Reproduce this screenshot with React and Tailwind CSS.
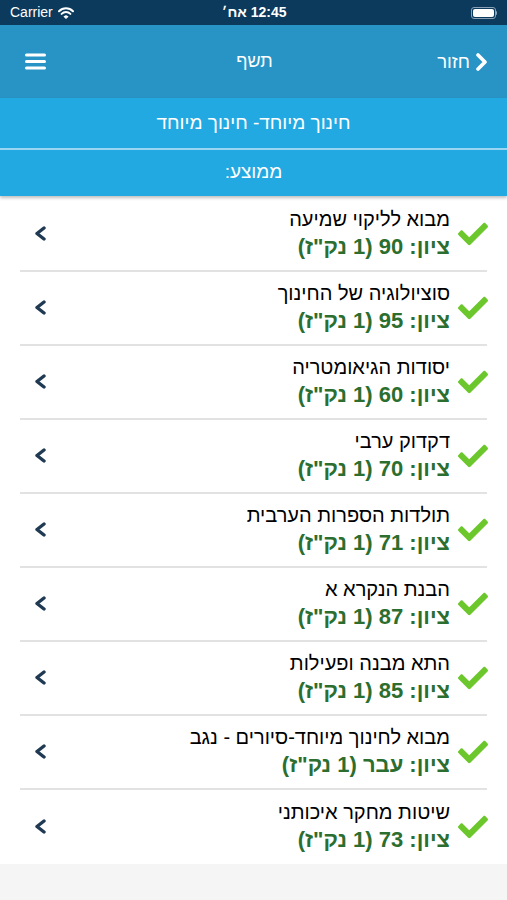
import { FaCheck } from 'react-icons/fa'

const COURSES = [
  { name: 'מבוא לליקוי שמיעה', grade: '90' },
  { name: 'סוציולוגיה של החינוך', grade: '95' },
  { name: 'יסודות הגיאומטריה', grade: '60' },
  { name: 'דקדוק ערבי', grade: '70' },
  { name: 'תולדות הספרות הערבית', grade: '71' },
  { name: 'הבנת הנקרא א', grade: '87' },
  { name: 'התא מבנה ופעילות', grade: '85' },
  { name: 'מבוא לחינוך מיוחד-סיורים - נגב', grade: 'עבר' },
  { name: 'שיטות מחקר איכותני', grade: '73' },
]

const font = { fontFamily: '"Liberation Sans", Arial, sans-serif' }

// chevron drawn as a thick rounded stroke (like the iOS app's glyph)
function Chevron({ dir = 'left', color, w = 12, h = 14, stroke = 3.4 }) {
  const d = dir === 'left' ? `M${w - 3} 2 L3 ${h / 2} L${w - 3} ${h - 2}` : `M3 2 L${w - 3} ${h / 2} L3 ${h - 2}`
  return (
    <svg width={w} height={h} viewBox={`0 0 ${w} ${h}`}>
      <path d={d} fill="none" stroke={color} strokeWidth={stroke} strokeLinecap="round" strokeLinejoin="round" />
    </svg>
  )
}

function StatusBar() {
  return (
    <div className="h-[25px] bg-[#0b3a5d] flex items-center justify-between px-[10px] text-white text-[14px]" style={font}>
      <div className="flex items-center gap-[5px]">
        <span>Carrier</span>
        <svg width="16" height="12" viewBox="0 0 16 12">
          <path d="M1 4.2 A10 10 0 0 1 15 4.2" fill="none" stroke="white" strokeWidth="2" strokeLinecap="round" />
          <path d="M3.6 6.9 A6.3 6.3 0 0 1 12.4 6.9" fill="none" stroke="white" strokeWidth="2" strokeLinecap="round" />
          <path d="M6 9.6 A3 3 0 0 1 10 9.6 L8 11.6 Z" fill="white" stroke="white" strokeWidth="1" strokeLinejoin="round" />
        </svg>
      </div>
      <span className="font-bold text-[14px] -ml-[36px]" dir="rtl">12:45 אח׳</span>
      <div className="flex items-center">
        <div className="w-[25px] h-[12px] rounded-[3px] border border-[#8aa0b4] p-[1px]">
          <div className="w-full h-full bg-white rounded-[2px]" />
        </div>
        <div className="w-[1.5px] h-[4px] bg-[#8aa0b4] rounded-r-sm" />
      </div>
    </div>
  )
}

export default function App() {
  return (
    <div className="w-[507px] h-[900px] bg-[#f5f5f5] overflow-hidden" style={font}>
      <StatusBar />

      <div className="h-[73px] bg-[#2894c5] flex items-center justify-between px-[25px] text-white">
        <svg width="21" height="17" viewBox="0 0 21 17">
          <rect x="0" y="0.5" width="21" height="3" rx="1.5" fill="white" />
          <rect x="0" y="7" width="21" height="3" rx="1.5" fill="white" />
          <rect x="0" y="13.5" width="21" height="3" rx="1.5" fill="white" />
        </svg>
        <span className="text-[18px] ml-[26px]" dir="rtl">תשף</span>
        <div className="flex items-center gap-[5px] -mr-[6px]" dir="rtl">
          <Chevron dir="right" color="white" w={13} h={18} stroke={3.6} />
          <span className="text-[18.5px]">חזור</span>
        </div>
      </div>

      <div className="bg-[#23a9e1] text-white text-[19px] shadow-[0_2px_3px_rgba(0,0,0,0.25)] relative" dir="rtl">
        <div className="h-[50px] flex items-center justify-center">חינוך מיוחד- חינוך מיוחד</div>
        <div className="h-[1.5px] bg-[#9ad6f1]" />
        <div className="h-[46px] flex items-center justify-center">ממוצע:</div>
      </div>

      <div className="bg-white pt-[2px]" dir="rtl">
        {COURSES.map((c, i) => (
          <div key={i} className={`mx-[20px] h-[74px] flex items-center ${i < COURSES.length - 1 ? 'border-b-2 border-[#e2e2e2]' : ''}`}>
            <div className="w-[38px] flex justify-start pt-[1px] -mr-[1px]">
              <FaCheck size={30} color="#6cc72c" />
            </div>
            <div className="flex-1 flex flex-col pb-[2px]">
              <span className="text-[20px] text-black leading-[27px]">{c.name}</span>
              <span className="text-[22px] font-bold text-[#2c6e2f] leading-[27px]">ציון: {c.grade} (1 נק"ז)</span>
            </div>
            <div className="w-[27px] flex justify-start">
              <Chevron dir="left" color="#1f3a52" w={13} h={15} stroke={3.4} />
            </div>
          </div>
        ))}
      </div>
    </div>
  )
}
